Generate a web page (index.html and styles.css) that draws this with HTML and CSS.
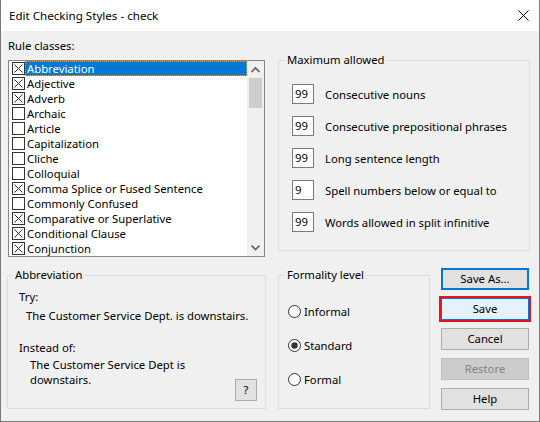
FILE: index.html
```html
<!DOCTYPE html>
<html>
<head>
<meta charset="utf-8">
<link rel="stylesheet" href="styles.css">
</head>
<body>
<div class="window">
  <div class="titlebar">
    <span class="title">Edit Checking Styles - check</span>
    <svg class="close" width="11" height="11" viewBox="0 0 11 11"><path d="M0.5 0.5 L10.5 10.5 M10.5 0.5 L0.5 10.5" stroke="#000" stroke-width="1" fill="none"/></svg>
  </div>
  <div class="content">
    <div class="top">
      <div class="rules">
        <div class="rules-label">Rule classes:</div>
        <div class="listbox">
          <ul class="items">
            <li class="item selected"><svg class="cb" viewBox="0 0 13 13"><rect x="0.5" y="0.5" width="12" height="12" fill="#fff" stroke="#333"/><path d="M2.5 2.5 L10.5 10.5 M10.5 2.5 L2.5 10.5" stroke="#333"/></svg><span class="txt">Abbreviation</span></li>
            <li class="item"><svg class="cb" viewBox="0 0 13 13"><rect x="0.5" y="0.5" width="12" height="12" fill="#fff" stroke="#333"/><path d="M2.5 2.5 L10.5 10.5 M10.5 2.5 L2.5 10.5" stroke="#333"/></svg><span class="txt">Adjective</span></li>
            <li class="item"><svg class="cb" viewBox="0 0 13 13"><rect x="0.5" y="0.5" width="12" height="12" fill="#fff" stroke="#333"/><path d="M2.5 2.5 L10.5 10.5 M10.5 2.5 L2.5 10.5" stroke="#333"/></svg><span class="txt">Adverb</span></li>
            <li class="item"><svg class="cb" viewBox="0 0 13 13"><rect x="0.5" y="0.5" width="12" height="12" fill="#fff" stroke="#333"/></svg><span class="txt">Archaic</span></li>
            <li class="item"><svg class="cb" viewBox="0 0 13 13"><rect x="0.5" y="0.5" width="12" height="12" fill="#fff" stroke="#333"/></svg><span class="txt">Article</span></li>
            <li class="item"><svg class="cb" viewBox="0 0 13 13"><rect x="0.5" y="0.5" width="12" height="12" fill="#fff" stroke="#333"/></svg><span class="txt">Capitalization</span></li>
            <li class="item"><svg class="cb" viewBox="0 0 13 13"><rect x="0.5" y="0.5" width="12" height="12" fill="#fff" stroke="#333"/></svg><span class="txt">Cliche</span></li>
            <li class="item"><svg class="cb" viewBox="0 0 13 13"><rect x="0.5" y="0.5" width="12" height="12" fill="#fff" stroke="#333"/></svg><span class="txt">Colloquial</span></li>
            <li class="item"><svg class="cb" viewBox="0 0 13 13"><rect x="0.5" y="0.5" width="12" height="12" fill="#fff" stroke="#333"/><path d="M2.5 2.5 L10.5 10.5 M10.5 2.5 L2.5 10.5" stroke="#333"/></svg><span class="txt">Comma Splice or Fused Sentence</span></li>
            <li class="item"><svg class="cb" viewBox="0 0 13 13"><rect x="0.5" y="0.5" width="12" height="12" fill="#fff" stroke="#333"/></svg><span class="txt">Commonly Confused</span></li>
            <li class="item"><svg class="cb" viewBox="0 0 13 13"><rect x="0.5" y="0.5" width="12" height="12" fill="#fff" stroke="#333"/><path d="M2.5 2.5 L10.5 10.5 M10.5 2.5 L2.5 10.5" stroke="#333"/></svg><span class="txt">Comparative or Superlative</span></li>
            <li class="item"><svg class="cb" viewBox="0 0 13 13"><rect x="0.5" y="0.5" width="12" height="12" fill="#fff" stroke="#333"/><path d="M2.5 2.5 L10.5 10.5 M10.5 2.5 L2.5 10.5" stroke="#333"/></svg><span class="txt">Conditional Clause</span></li>
            <li class="item"><svg class="cb" viewBox="0 0 13 13"><rect x="0.5" y="0.5" width="12" height="12" fill="#fff" stroke="#333"/><path d="M2.5 2.5 L10.5 10.5 M10.5 2.5 L2.5 10.5" stroke="#333"/></svg><span class="txt">Conjunction</span></li>
          </ul>
          <div class="scrollbar">
            <svg class="arrow" width="17" height="17" viewBox="0 0 17 17"><polyline points="4.5,11 8.5,7 12.5,11" fill="none" stroke="#606060" stroke-width="1.6"/></svg>
            <div class="track"><div class="thumb"></div></div>
            <svg class="arrow" width="17" height="17" viewBox="0 0 17 17"><polyline points="4.5,6.5 8.5,10.5 12.5,6.5" fill="none" stroke="#606060" stroke-width="1.6"/></svg>
          </div>
        </div>
      </div>
      <fieldset class="group max">
        <legend>Maximum allowed</legend>
        <div class="fields">
          <div class="field"><span class="num">99</span><span>Consecutive nouns</span></div>
          <div class="field"><span class="num">99</span><span>Consecutive prepositional phrases</span></div>
          <div class="field"><span class="num">99</span><span>Long sentence length</span></div>
          <div class="field"><span class="num">9</span><span>Spell numbers below or equal to</span></div>
          <div class="field"><span class="num">99</span><span>Words allowed in split infinitive</span></div>
        </div>
      </fieldset>
    </div>
    <div class="bottom">
      <fieldset class="group example">
        <legend>Abbreviation</legend>
        <div class="ex-label try">Try:</div>
        <div class="ex-text">The Customer Service Dept. is downstairs.</div>
        <div class="ex-label instead">Instead of:</div>
        <div class="ex-row">
          <div class="ex-text2">The Customer Service Dept is<br>downstairs.</div>
          <button class="btn qbtn">?</button>
        </div>
      </fieldset>
      <fieldset class="group formality">
        <legend>Formality level</legend>
        <div class="radios">
          <div class="radio"><svg class="rb" viewBox="0 0 13 13"><circle cx="6.5" cy="6.5" r="6" fill="#fff" stroke="#333"/></svg><span>Informal</span></div>
          <div class="radio"><svg class="rb" viewBox="0 0 13 13"><circle cx="6.5" cy="6.5" r="6" fill="#fff" stroke="#333"/><circle cx="6.5" cy="6.5" r="3.2" fill="#333"/></svg><span>Standard</span></div>
          <div class="radio"><svg class="rb" viewBox="0 0 13 13"><circle cx="6.5" cy="6.5" r="6" fill="#fff" stroke="#333"/></svg><span>Formal</span></div>
        </div>
      </fieldset>
      <div class="buttons">
        <button class="btn default">Save As...</button>
        <button class="btn save">Save</button>
        <button class="btn">Cancel</button>
        <button class="btn disabled">Restore</button>
        <button class="btn">Help</button>
      </div>
    </div>
  </div>
</div>
</body>
</html>
```

FILE: styles.css
```css
body {
  margin: 0;
  font-family: "Noto Sans", "Open Sans", sans-serif;
  font-size: 11.3px;
  color: #000;
}
.window {
  width: 540px;
  height: 422px;
  box-sizing: border-box;
  border: 1px solid #7a7a7a;
  border-top: none;
  background: #f0f0f0;
  overflow: hidden;
}
.titlebar {
  height: 31px;
  background: #fff;
  display: flex;
  align-items: center;
  justify-content: space-between;
  padding: 0 10px 0 8px;
}
.title {
  font-size: 11.6px;
}
.close {
  display: block;
}
.top {
  display: flex;
  align-items: flex-start;
}
.rules {
  margin-left: 7px;
  margin-top: 7px;
  width: 257px;
}
.rules-label {
  line-height: 16px;
  height: 16px;
  margin-bottom: 6px;
}
.listbox {
  height: 197px;
  box-sizing: border-box;
  border: 1px solid #828790;
  background: #fff;
  display: flex;
}
.items {
  flex: 1;
  list-style: none;
  margin: 0;
  padding: 0;
}
.item {
  height: 15px;
  display: flex;
  align-items: center;
  padding-left: 3px;
}
.cb {
  width: 13px;
  height: 13px;
  flex: none;
}
.txt {
  line-height: 15px;
  padding: 0 2px;
  white-space: nowrap;
}
.selected .txt {
  flex: 1;
  background: #0078d7;
  color: #fff;
  outline: 1px dotted #f0a030;
  outline-offset: -1px;
}
.scrollbar {
  width: 17px;
  background: #f0f0f0;
  display: flex;
  flex-direction: column;
}
.arrow {
  display: block;
  flex: none;
}
.track {
  flex: 1;
}
.thumb {
  height: 30px;
  margin: 0 2px;
  background: #cdcdcd;
}
fieldset.group {
  border: 1px solid #dcdcdc;
  margin: 0;
  padding: 0;
  min-width: 0;
  box-sizing: border-box;
}
fieldset.group legend {
  padding: 0 2px;
  margin-left: 6px;
  line-height: 16px;
}
fieldset.max {
  margin-left: 13px;
  margin-top: 21px;
  width: 252px;
  height: 199px;
}
.fields {
  padding-top: 16px;
  padding-left: 13px;
  display: flex;
  flex-direction: column;
  gap: 12px;
}
.field {
  display: flex;
  align-items: center;
  height: 20px;
}
.num {
  width: 22px;
  height: 20px;
  box-sizing: border-box;
  border: 1px solid #7a7a7a;
  background: #fff;
  padding-left: 2px;
  line-height: 18px;
  margin-right: 11px;
}
.bottom {
  display: flex;
  align-items: flex-start;
  margin-top: 10px;
}
fieldset.example {
  margin-left: 6px;
  width: 259px;
  height: 142px;
}
fieldset.example legend {
  margin-left: 5px;
}
.ex-label {
  line-height: 16px;
  padding-left: 11px;
}
.try {
  margin-top: 6px;
}
.ex-text {
  line-height: 16px;
  padding-left: 18px;
  margin-top: 3px;
}
.instead {
  margin-top: 16px;
}
.ex-row {
  display: flex;
  justify-content: space-between;
  align-items: flex-start;
  margin-top: 1px;
  padding-right: 8px;
}
.ex-text2 {
  line-height: 15px;
  padding-left: 22px;
}
.btn {
  font-family: inherit;
  font-size: 11.3px;
  color: #000;
  background: #e1e1e1;
  border: 1px solid #adadad;
  height: 22px;
  padding: 0;
  margin: 0;
  box-sizing: border-box;
  line-height: 18px;
}
.qbtn {
  width: 22px;
  margin-top: 22px;
}
fieldset.formality {
  margin-left: 12px;
  width: 152px;
  height: 142px;
}
.radios {
  padding-top: 20px;
  padding-left: 9px;
  display: flex;
  flex-direction: column;
  gap: 18px;
}
.radio {
  display: flex;
  align-items: center;
  height: 16px;
  gap: 3px;
}
.rb {
  width: 13px;
  height: 13px;
  flex: none;
}
.buttons {
  margin-left: 11px;
  margin-top: 1px;
  width: 88px;
  display: flex;
  flex-direction: column;
  gap: 8px;
}
.buttons .btn {
  width: 88px;
}
.btn.default {
  border: 2px solid #0078d7;
}
.btn.save {
  background: #e5f1fb;
  border: 1px solid #0078d7;
  box-shadow: 0 0 0 2px #e81123;
}
.btn.disabled {
  background: #cccccc;
  border-color: #bfbfbf;
  color: #838383;
}
```
